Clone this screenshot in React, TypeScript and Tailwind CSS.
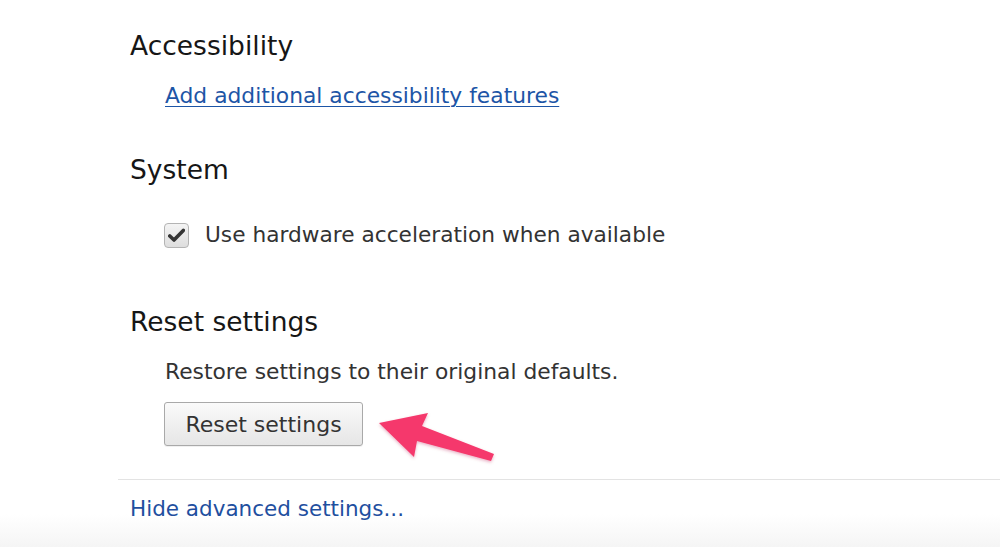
import React from 'react';

const font = { fontFamily: '"DejaVu Sans", "Liberation Sans", sans-serif' };

function Checkbox() {
  return (
    <span className="flex h-[25px] w-[25px] items-center justify-center rounded-[4px] border border-[#b4b4b4] bg-gradient-to-b from-[#f4f4f4] to-[#dedede]">
      <svg width="17" height="15" viewBox="0 0 17 15">
        <path d="M1.8 8 L6 12 L15.3 2.4" fill="none" stroke="#353535" strokeWidth="3.6" strokeLinecap="round" strokeLinejoin="round" />
      </svg>
    </span>
  );
}

function Arrow() {
  return (
    <svg className="pointer-events-none absolute left-0 top-0" width="1000" height="547" viewBox="0 0 1000 547">
      <defs>
        <filter id="sh" x="-20%" y="-20%" width="140%" height="140%">
          <feDropShadow dx="0" dy="1.5" stdDeviation="1.5" floodColor="#b01040" floodOpacity="0.3" />
        </filter>
      </defs>
      <polygon
        points="379,423 428,413 422,426 494,454 491,461 417,441 414,457"
        fill="#f5386c"
        filter="url(#sh)"
      />
    </svg>
  );
}

export default function App() {
  return (
    <div className="relative h-[547px] w-[1000px] overflow-hidden bg-gradient-to-b from-white from-[94%] to-[#f5f5f5]" style={font}>
      <div className="pl-[130px] pt-[31px]">
        {/* Accessibility */}
        <h2 className="h-[30px] text-[26.5px] leading-[30px] text-[#161616]">Accessibility</h2>
        <div className="mt-[20px] pl-[35px]">
          <a href="#" className="text-[21.8px] leading-[30px] text-[#1d55a6] underline decoration-1 underline-offset-[3px]">
            Add additional accessibility features
          </a>
        </div>

        {/* System */}
        <h2 className="mt-[44px] h-[30px] text-[26.5px] leading-[30px] text-[#161616]">System</h2>
        <label className="mt-[35px] flex h-[30px] items-center gap-[16px] pl-[34px]">
          <Checkbox />
          <span className="text-[21.7px] leading-[30px] text-[#333]">Use hardware acceleration when available</span>
        </label>

        {/* Reset settings */}
        <h2 className="mt-[57px] h-[30px] text-[26.5px] leading-[30px] text-[#161616]">Reset settings</h2>
        <p className="mt-[20px] pl-[35px] text-[21.8px] leading-[30px] text-[#333]">Restore settings to their original defaults.</p>
        <div className="mt-[15px] pl-[34px]">
          <button
            type="button"
            className="h-[44px] w-[199px] rounded-[3px] border border-[#a9a9a9] bg-gradient-to-b from-[#fafafa] to-[#e6e6e6] text-[22px] text-[#333] shadow-[0_1px_0_rgba(0,0,0,0.06)]"
          >
            Reset settings
          </button>
        </div>
      </div>

      <div className="ml-[118px] mt-[33px] h-px bg-[#e3e3e3]" />

      <div className="pl-[130px] pt-[14px]">
        <a href="#" className="text-[21.5px] leading-[30px] text-[#1f4f9f]">Hide advanced settings...</a>
      </div>

      <Arrow />
    </div>
  );
}
